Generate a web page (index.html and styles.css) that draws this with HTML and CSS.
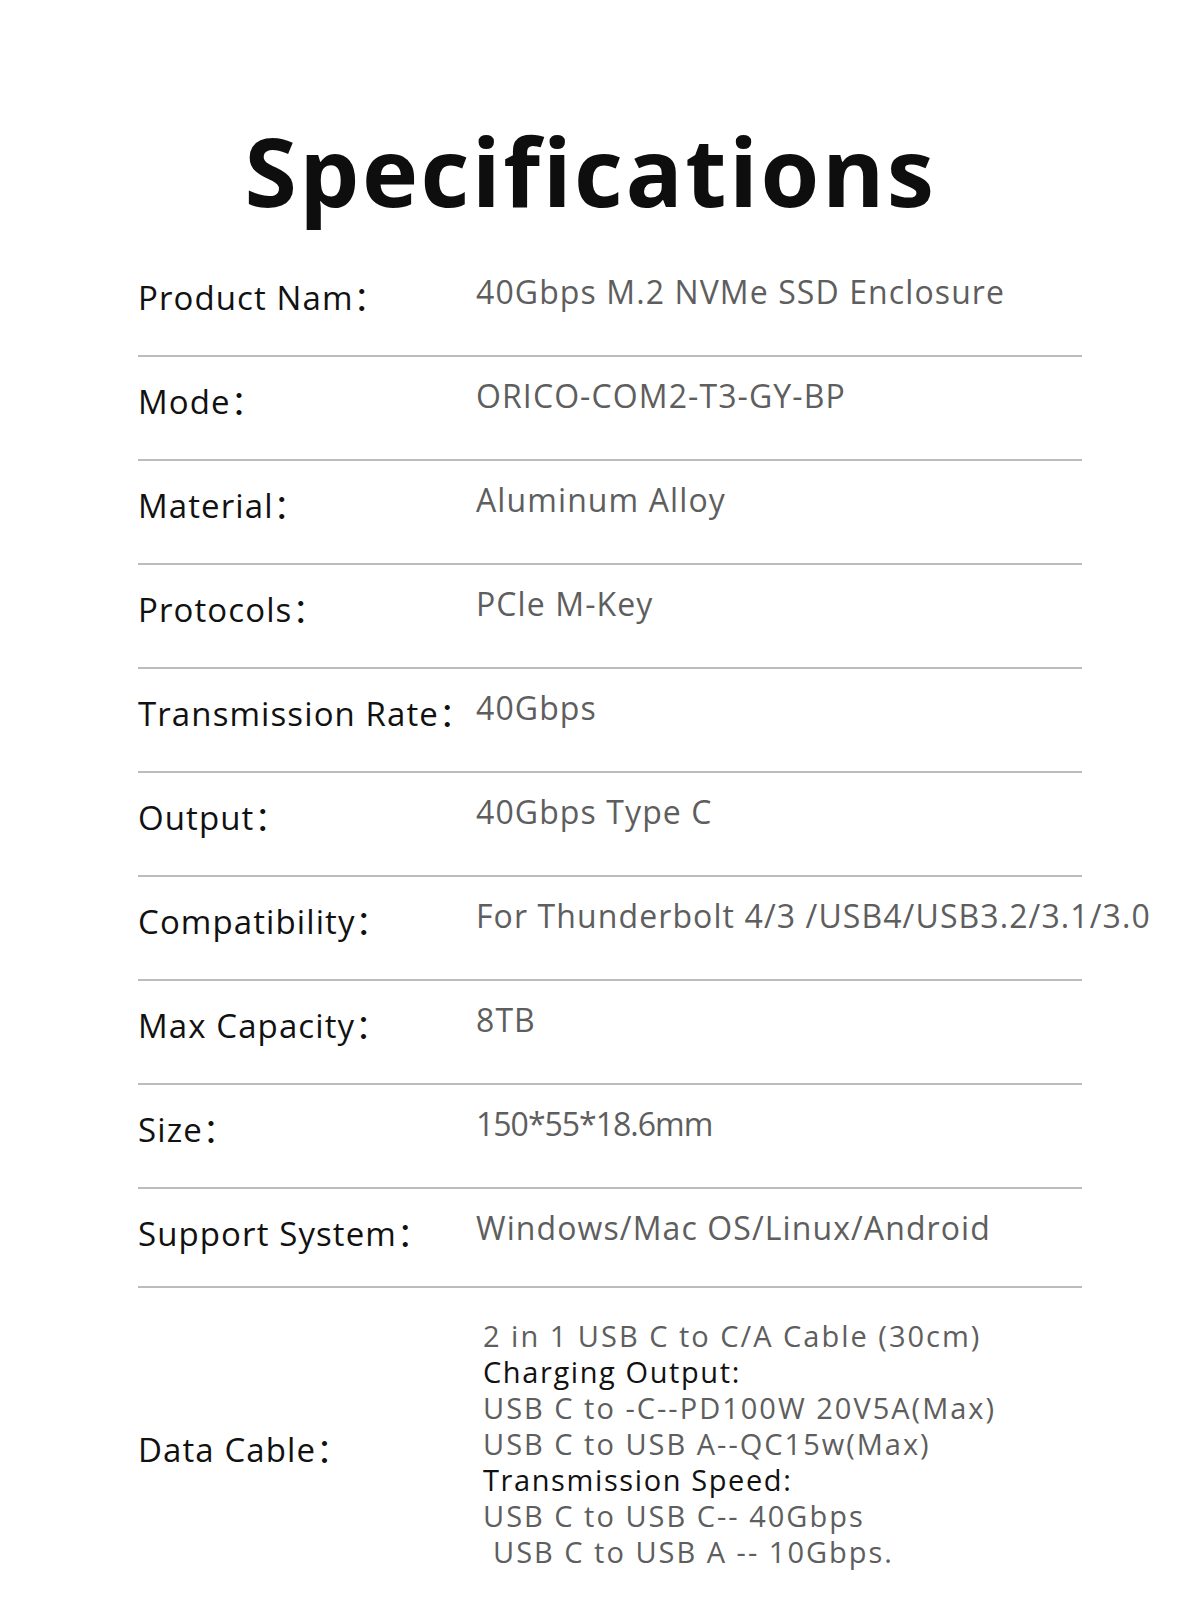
FILE: index.html
```html
<!DOCTYPE html>
<html lang="en">
<head>
<meta charset="utf-8">
<title>Specifications</title>
<link rel="stylesheet" href="styles.css">
</head>
<body>
<main class="page">
  <h1 class="title">Specifications</h1>
  <section class="specs">
    <div class="row"><div class="label">Product Nam：</div><div class="value">40Gbps M.2 NVMe SSD Enclosure</div></div>
    <div class="row"><div class="label">Mode：</div><div class="value">ORICO-COM2-T3-GY-BP</div></div>
    <div class="row"><div class="label">Material：</div><div class="value">Aluminum Alloy</div></div>
    <div class="row"><div class="label">Protocols：</div><div class="value">PCle M-Key</div></div>
    <div class="row"><div class="label">Transmission Rate：</div><div class="value">40Gbps</div></div>
    <div class="row"><div class="label">Output：</div><div class="value">40Gbps Type C</div></div>
    <div class="row"><div class="label">Compatibility：</div><div class="value">For Thunderbolt 4/3 /USB4/USB3.2/3.1/3.0</div></div>
    <div class="row"><div class="label">Max Capacity：</div><div class="value">8TB</div></div>
    <div class="row"><div class="label">Size：</div><div class="value value-digits">150*55*18.6mm</div></div>
    <div class="row row-short"><div class="label">Support System：</div><div class="value">Windows/Mac OS/Linux/Android</div></div>
    <div class="row row-cable">
      <div class="label label-cable">Data Cable：</div>
      <div class="cable">
        <div class="cable-line">2 in 1 USB C to C/A Cable (30cm)</div>
        <div class="cable-line cable-head">Charging Output:</div>
        <div class="cable-line">USB C to -C--PD100W 20V5A(Max)</div>
        <div class="cable-line">USB C to USB A--QC15w(Max)</div>
        <div class="cable-line cable-head">Transmission Speed:</div>
        <div class="cable-line">USB C to USB C-- 40Gbps</div>
        <div class="cable-line cable-indent">USB C to USB A -- 10Gbps.</div>
      </div>
    </div>
  </section>
</main>
</body>
</html>
```

FILE: styles.css
```css
html, body {
  margin: 0;
  padding: 0;
  background: #ffffff;
}

body {
  font-family: "Open Sans", "Noto Sans", "Noto Sans CJK SC", sans-serif;
  color: #111111;
}

.page {
  width: 1200px;
  height: 1600px;
  overflow: hidden;
  padding-top: 113px;
  box-sizing: border-box;
}

.title {
  margin: 0;
  padding-right: 19px;
  text-align: center;
  font-size: 95px;
  line-height: 114px;
  font-weight: 700;
  letter-spacing: 2.5px;
  color: #0e0e0e;
}

.specs {
  margin-top: 26px;
  margin-left: 138px;
  width: 944px;
}

.row {
  display: flex;
  height: 102px;
  border-bottom: 2px solid #bcbcbc;
  white-space: nowrap;
}

.row-short {
  height: 97px;
}

.row-cable {
  height: 300px;
  border-bottom: none;
}

.label {
  width: 338px;
  flex: none;
  padding-top: 25px;
  font-size: 33px;
  line-height: 40px;
  letter-spacing: 1.1px;
  color: #111111;
}

.value {
  padding-top: 19px;
  font-size: 32px;
  line-height: 40px;
  font-weight: 400;
  letter-spacing: 1.1px;
  color: #5e5e5e;
}

.value-digits {
  letter-spacing: -1px;
}

.label-cable {
  padding-top: 142px;
}

.cable {
  padding-top: 30px;
  padding-left: 7px;
}

.cable-line {
  font-size: 29px;
  line-height: 36px;
  font-weight: 400;
  letter-spacing: 2px;
  color: #5e5e5e;
}

.cable-head {
  color: #111111;
  letter-spacing: 1.6px;
}

.cable-indent {
  padding-left: 10px;
}
```
